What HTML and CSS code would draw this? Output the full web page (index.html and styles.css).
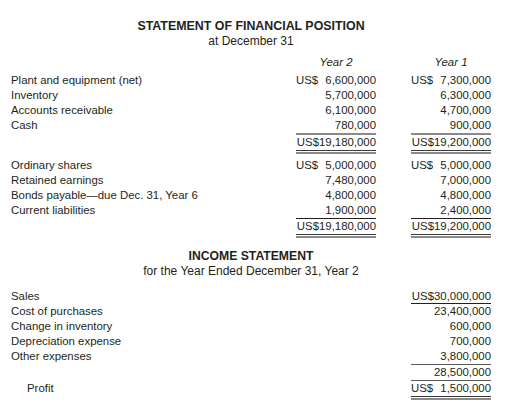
FILE: index.html
```html
<!DOCTYPE html>
<html>
<head>
<meta charset="utf-8">
<link rel="stylesheet" href="styles.css">
</head>
<body>
<div class="sheet">
  <div class="title">STATEMENT OF FINANCIAL POSITION</div>
  <div class="subtitle">at December 31</div>

  <div class="head-row">
    <div></div>
    <div class="yr">Year 2</div>
    <div class="yr">Year 1</div>
  </div>

  <div class="block b1">
    <div class="lbl">Plant and equipment (net)</div>
    <div class="num split"><span>US$</span><span>6,600,000</span></div>
    <div class="num split"><span>US$</span><span>7,300,000</span></div>

    <div class="lbl">Inventory</div>
    <div class="num">5,700,000</div>
    <div class="num">6,300,000</div>

    <div class="lbl">Accounts receivable</div>
    <div class="num">6,100,000</div>
    <div class="num">4,700,000</div>

    <div class="lbl">Cash</div>
    <div class="num grey">780,000</div>
    <div class="num grey">900,000</div>

    <div class="lbl"></div>
    <div class="num dbl">US$19,180,000</div>
    <div class="num dbl">US$19,200,000</div>
  </div>

  <div class="block b2">
    <div class="lbl">Ordinary shares</div>
    <div class="num split"><span>US$</span><span>5,000,000</span></div>
    <div class="num split"><span>US$</span><span>5,000,000</span></div>

    <div class="lbl">Retained earnings</div>
    <div class="num">7,480,000</div>
    <div class="num">7,000,000</div>

    <div class="lbl">Bonds payable—due Dec. 31, Year 6</div>
    <div class="num">4,800,000</div>
    <div class="num">4,800,000</div>

    <div class="lbl">Current liabilities</div>
    <div class="num thin">1,900,000</div>
    <div class="num thin">2,400,000</div>

    <div class="lbl"></div>
    <div class="num dbl">US$19,180,000</div>
    <div class="num dbl">US$19,200,000</div>
  </div>

  <div class="title t2">INCOME STATEMENT</div>
  <div class="subtitle s2">for the Year Ended December 31, Year 2</div>

  <div class="block b3">
    <div class="lbl short">Sales</div>
    <div class="num short"></div>
    <div class="num thin short">US$30,000,000</div>

    <div class="lbl">Cost of purchases</div>
    <div class="num"></div>
    <div class="num">23,400,000</div>

    <div class="lbl">Change in inventory</div>
    <div class="num"></div>
    <div class="num">600,000</div>

    <div class="lbl">Depreciation expense</div>
    <div class="num"></div>
    <div class="num">700,000</div>

    <div class="lbl">Other expenses</div>
    <div class="num"></div>
    <div class="num mid">3,800,000</div>

    <div class="lbl"></div>
    <div class="num"></div>
    <div class="num mid">28,500,000</div>

    <div class="lbl indent">Profit</div>
    <div class="num"></div>
    <div class="num dbl split"><span>US$</span><span>1,500,000</span></div>
  </div>
</div>
</body>
</html>
```

FILE: styles.css
```css
html, body {
  margin: 0;
  padding: 0;
  background: #ffffff;
}

body {
  font-family: "Liberation Sans", Arial, sans-serif;
  font-size: 11.4px;
  color: #231f20;
}

.sheet {
  width: 514px;
  padding: 18px 23px 0 11px;
  box-sizing: border-box;
}

.title {
  text-align: center;
  font-weight: bold;
  font-size: 12.4px;
  line-height: 16px;
}

.subtitle {
  text-align: center;
  font-size: 12px;
  line-height: 15px;
}

.head-row,
.block {
  display: grid;
  grid-template-columns: 1fr 80px 80px;
  column-gap: 35px;
}

.head-row {
  margin-top: 6px;
  line-height: 15px;
}

.yr {
  font-style: italic;
  text-align: center;
}

.block {
  line-height: 15px;
}

.b1 {
  margin-top: 3px;
}

.b2 {
  margin-top: 4px;
}

.t2 {
  margin-top: 11px;
  font-size: 12.2px;
  line-height: 15px;
}

.b3 {
  margin-top: 10px;
}

.lbl {
  white-space: nowrap;
}

.indent {
  padding-left: 16px;
}

.short {
  line-height: 14px;
}

.num {
  text-align: right;
  white-space: nowrap;
}

.split {
  display: flex;
  justify-content: space-between;
  align-items: flex-start;
}

.grey {
  border-bottom: 2px solid #8a8a8a;
}

.mid {
  border-bottom: 1px solid #5a5a5a;
}

.thin {
  border-bottom: 1px solid #231f20;
}

.dbl::after {
  content: "";
  display: block;
  height: 1px;
  border-top: 1px solid #3a3a3a;
  border-bottom: 2px solid #8a8a8a;
}

.dbl.split {
  flex-wrap: wrap;
}

.dbl.split::after {
  flex-basis: 100%;
}
```
